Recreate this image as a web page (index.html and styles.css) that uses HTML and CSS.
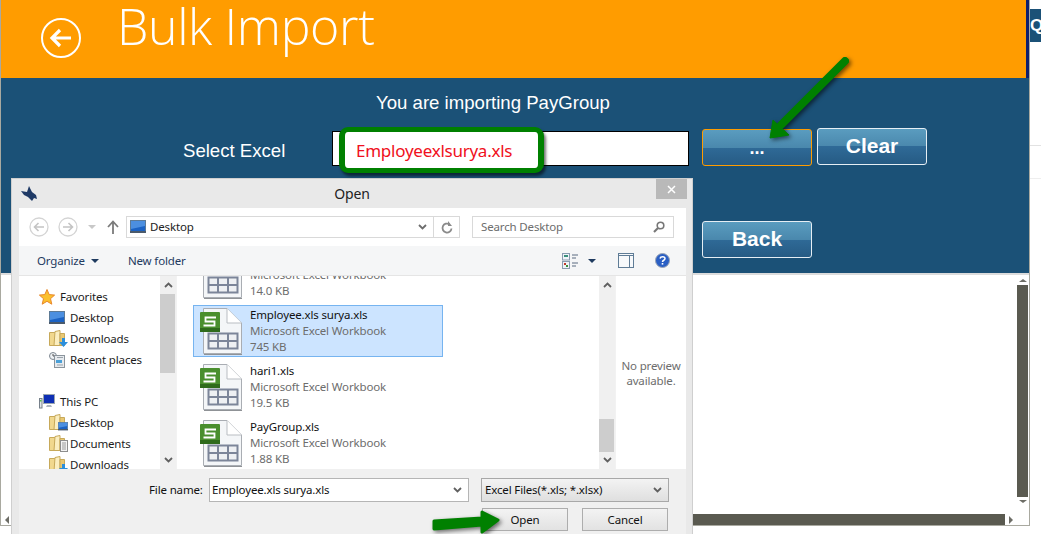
FILE: index.html
```html
<!DOCTYPE html>
<html lang="en">
<head>
<meta charset="utf-8">
<title>Bulk Import</title>
<link rel="stylesheet" href="styles.css">
</head>
<body>
<svg class="defs" width="0" height="0" aria-hidden="true">
  <symbol id="xls" viewBox="0 0 44 48">
    <path d="M3.500 1.500H27L41.500 16V46.500H3.500Z" fill="#f4f6f8" stroke="#a9adb3"/>
    <path d="M27 1.500V16H41.500" fill="#fff" stroke="#b9bdc2"/>
    <path d="M4 47.500H42" stroke="#8f9296" stroke-width="1"/>
    <path d="M8.500 26.500H37.500V41.500H8.500ZM8.500 34H37.500M18 26.500V41.500M28 26.500V41.500" fill="#eef0f3" stroke="#7c8599" stroke-width="2"/>
    <rect x="0" y="5" width="20" height="20" rx="1" fill="#4a8f2e"/>
    <rect x="0" y="21" width="20" height="4" fill="#2f6b1c"/>
    <path d="M16 10.500H5.500V14.500H14.500V18.500H3.500" fill="none" stroke="#fff" stroke-width="1.800"/>
  </symbol>
  <symbol id="screen" viewBox="0 0 16 14">
    <rect x=".5" y=".5" width="15" height="12" fill="#1b62c4" stroke="#5d7a96"/>
    <path d="M1 1H15V6L1 9Z" fill="#4c8fe0"/>
    <rect x="0" y="11" width="16" height="2" fill="#4b5a6b"/>
  </symbol>
  <symbol id="folder" viewBox="0 0 16 17">
    <path d="M.5 2.500H6.500V15.500H.5Z" fill="#f1d88e" stroke="#c7a95a"/>
    <path d="M6 1.500L11 .5V15.500H5Z" fill="#fbeec0" stroke="#c7a95a"/>
    <path d="M11 3.500H15.500V15.500H11Z" fill="#e9c873" stroke="#c7a95a"/>
  </symbol>
  <symbol id="sparrow" viewBox="0 0 16 16">
    <path d="M0 5L6 6L8 0L11 6L15 9L16 13L13 12L11 15L7 11L3 9Z" fill="#1f3a66"/>
  </symbol>
</svg>

<main class="app">
  <header class="hero">
    <svg class="back-circle" width="42" height="42" viewBox="0 0 42 42" aria-hidden="true">
      <circle cx="21" cy="21" r="19" fill="none" stroke="#fff" stroke-width="2"/>
      <path d="M31 21H12M20 13L12 21L20 29" fill="none" stroke="#fff" stroke-width="3.200"/>
    </svg>
    <h1 class="hero-title">Bulk Import</h1>
  </header>

  <section class="panel">
    <p class="lead">You are importing PayGroup</p>
    <div class="form-row">
      <label class="field-label">Select Excel</label>
      <div class="file-input"></div>
      <button class="glossy focus">...</button>
      <button class="glossy clear">Clear</button>
    </div>
    <div class="back-row"><button class="glossy">Back</button></div>
  </section>

  <section class="results">
    <div class="vscroll">
      <span class="tri tri-up"></span>
      <span class="vthumb"></span>
      <span class="tri tri-down"></span>
    </div>
    <div class="hscroll">
      <span class="tri tri-left"></span>
      <span class="hthumb"></span>
      <span class="tri tri-right"></span>
    </div>
  </section>
</main>

<aside class="sidebar">
  <div class="side-block">Q</div>
  <div class="side-line"></div>
</aside>

<div class="dialog">
  <div class="dlg-title">
    <svg class="bird" width="16" height="16"><use href="#sparrow"/></svg>
    <span class="dlg-name">Open</span>
    <span class="dlg-close">
      <svg width="9" height="9" viewBox="0 0 9 9"><path d="M1 1L8 8M8 1L1 8" stroke="#fff" stroke-width="1.500"/></svg>
    </span>
  </div>
  <div class="dlg-client">
    <div class="nav-row">
      <svg class="nav-btn" width="20" height="20" viewBox="0 0 20 20"><circle cx="10" cy="10" r="9" fill="none" stroke="#d4d4d4" stroke-width="1.300"/><path d="M15 10H6M9.500 6L5.500 10L9.500 14" fill="none" stroke="#c4c4c4" stroke-width="1.600"/></svg>
      <svg class="nav-btn fwd" width="20" height="20" viewBox="0 0 20 20"><circle cx="10" cy="10" r="9" fill="none" stroke="#d4d4d4" stroke-width="1.300"/><path d="M5 10H14M10.500 6L14.500 10L10.500 14" fill="none" stroke="#c4c4c4" stroke-width="1.600"/></svg>
      <span class="caret-gray"></span>
      <svg class="nav-up" width="12" height="14" viewBox="0 0 12 14"><path d="M6 14V2M1 7L6 1.500L11 7" fill="none" stroke="#7b7b7b" stroke-width="1.800"/></svg>
      <div class="address">
        <svg width="16" height="14"><use href="#screen"/></svg>
        <span class="addr-text">Desktop</span>
        <svg class="chev" width="9" height="6" viewBox="0 0 9 6"><path d="M1 1L4.500 4.500L8 1" fill="none" stroke="#6d6d6d" stroke-width="1.800"/></svg>
        <span class="refresh">
          <svg width="12" height="13" viewBox="0 0 12 13"><path d="M8.500 3.300A4.500 4.500 0 1 0 10.500 7.500" fill="none" stroke="#8a8a8a" stroke-width="1.800"/><path d="M7 0V5H11Z" fill="#8a8a8a"/></svg>
        </span>
      </div>
      <div class="search">
        <span>Search Desktop</span>
        <svg width="12" height="12" viewBox="0 0 12 12"><circle cx="7.500" cy="4.500" r="3.300" fill="none" stroke="#777" stroke-width="1.600"/><path d="M5 7L1 11" stroke="#777" stroke-width="2.200"/></svg>
      </div>
    </div>
    <div class="toolbar">
      <span class="tool">Organize</span>
      <span class="caret-dark"></span>
      <span class="tool newf">New folder</span>
      <span class="tool-spacer"></span>
      <svg width="16" height="16" viewBox="0 0 16 16"><rect x=".5" y=".5" width="7" height="6.500" fill="#eef3f8" stroke="#8a9bb0"/><rect x="2" y="2" width="4" height="2" fill="#3a8f7c"/><rect x=".5" y="8.500" width="7" height="7" fill="#eef3f8" stroke="#8a9bb0"/><rect x="2" y="10" width="2" height="2" fill="#c0392b"/><rect x="4" y="12" width="2" height="2" fill="#3a8f3c"/><path d="M10 2H16M10 5H14M10 10H16M10 13H14" stroke="#5a6b80"/></svg>
      <span class="caret-dark view-caret"></span>
      <svg class="pane" width="16" height="15" viewBox="0 0 16 15"><rect x=".5" y=".5" width="15" height="14" fill="#f7f9fb" stroke="#5f7c96"/><path d="M1 2.500H15M11.500 3V14" stroke="#5f7c96"/></svg>
      <svg class="help" width="15" height="15" viewBox="0 0 15 15"><circle cx="7.500" cy="7.500" r="7" fill="#2a5fc4" stroke="#9aa5b5"/><path d="M5 5.500C5.500 3 10 3 10 5.500C10 7.500 7.500 7 7.500 9" fill="none" stroke="#fff" stroke-width="1.500"/><rect x="6.700" y="10" width="1.600" height="1.600" fill="#fff"/></svg>
    </div>
    <div class="browser">
      <nav class="tree">
        <div class="tree-row lvl0"><svg width="16" height="16" viewBox="0 0 16 16"><path d="M8 .5L10.200 5.600L15.600 6.100L11.500 9.700L12.800 15.200L8 12.300L3.200 15.200L4.500 9.700L.4 6.100L5.800 5.600Z" fill="#fbc02d" stroke="#e8862a"/></svg><span>Favorites</span></div>
        <div class="tree-row"><svg width="16" height="14"><use href="#screen"/></svg><span>Desktop</span></div>
        <div class="tree-row"><span class="ico"><svg width="16" height="17"><use href="#folder"/></svg><svg class="badge" width="9" height="9" viewBox="0 0 9 9"><path d="M3 0H6V4H9L4.500 9L0 4H3Z" fill="#2c8fdc"/></svg></span><span>Downloads</span></div>
        <div class="tree-row"><svg width="16" height="16" viewBox="0 0 16 16"><circle cx="4" cy="4" r="3.500" fill="#eef1f4" stroke="#7d8790"/><path d="M4 2V4H6" stroke="#555" fill="none"/><rect x="5.500" y="3.500" width="10" height="12" fill="#e6eaee" stroke="#8b949c"/><rect x="7" y="8" width="6" height="3" fill="#4aa0d8"/><path d="M8 5.500H14M8 13H14" stroke="#9aa3ab"/></svg><span>Recent places</span></div>
        <div class="tree-row blank"></div>
        <div class="tree-row lvl0"><svg width="16" height="15" viewBox="0 0 16 15"><rect x=".5" y="4.500" width="2.500" height="9.500" fill="#dfe3e6" stroke="#76808a"/><rect x="4.500" y=".5" width="11" height="9" fill="#0e2fb4" stroke="#9aa5b0"/><path d="M8 11H12L13 13H7Z" fill="#aeb6bd"/><rect x="1" y="6" width="1.500" height="1.500" fill="#58c04a"/></svg><span>This PC</span></div>
        <div class="tree-row"><span class="ico"><svg width="16" height="17"><use href="#folder"/></svg><svg class="badge" width="10" height="9"><use href="#screen"/></svg></span><span>Desktop</span></div>
        <div class="tree-row"><span class="ico"><svg width="16" height="17"><use href="#folder"/></svg><svg class="badge" width="8" height="12" viewBox="0 0 8 12"><rect x=".5" y=".5" width="7" height="11" fill="#f3f3f3" stroke="#8d8d8d"/><path d="M2 3H6M2 5H6M2 7H6M2 9H6" stroke="#9a9a9a"/></svg></span><span>Documents</span></div>
        <div class="tree-row"><span class="ico"><svg width="16" height="17"><use href="#folder"/></svg><svg class="badge" width="9" height="9" viewBox="0 0 9 9"><path d="M3 0H6V4H9L4.500 9L0 4H3Z" fill="#2c8fdc"/></svg></span><span>Downloads</span></div>
      </nav>
      <div class="dscroll tree-scroll">
        <svg class="cv" width="9" height="6" viewBox="0 0 9 6"><path d="M1 5L4.500 1.500L8 5" fill="none" stroke="#606060" stroke-width="1.800"/></svg>
        <svg class="cv cv-end" width="9" height="6" viewBox="0 0 9 6"><path d="M1 1L4.500 4.500L8 1" fill="none" stroke="#606060" stroke-width="1.800"/></svg>
        <span class="dthumb"></span>
      </div>
      <div class="files">
        <div class="file">
          <svg width="44" height="48"><use href="#xls"/></svg>
          <div class="file-text"><b>File</b><i>Microsoft Excel Workbook</i><i>14.0 KB</i></div>
        </div>
        <div class="file selected">
          <svg width="44" height="48"><use href="#xls"/></svg>
          <div class="file-text"><b>Employee.xls surya.xls</b><i>Microsoft Excel Workbook</i><i>745 KB</i></div>
        </div>
        <div class="file">
          <svg width="44" height="48"><use href="#xls"/></svg>
          <div class="file-text"><b>hari1.xls</b><i>Microsoft Excel Workbook</i><i>19.5 KB</i></div>
        </div>
        <div class="file">
          <svg width="44" height="48"><use href="#xls"/></svg>
          <div class="file-text"><b>PayGroup.xls</b><i>Microsoft Excel Workbook</i><i>1.88 KB</i></div>
        </div>
      </div>
      <div class="dscroll file-scroll">
        <svg class="cv" width="9" height="6" viewBox="0 0 9 6"><path d="M1 5L4.500 1.500L8 5" fill="none" stroke="#606060" stroke-width="1.800"/></svg>
        <svg class="cv cv-end" width="9" height="6" viewBox="0 0 9 6"><path d="M1 1L4.500 4.500L8 1" fill="none" stroke="#606060" stroke-width="1.800"/></svg>
        <span class="dthumb"></span>
      </div>
      <div class="preview">No preview available.</div>
    </div>
    <div class="dlg-foot">
      <div class="foot-row">
        <span class="foot-label">File name:</span>
        <div class="name-input"><span>Employee.xls surya.xls</span><svg width="9" height="6" viewBox="0 0 9 6"><path d="M1 1L4.500 4.500L8 1" fill="none" stroke="#606060" stroke-width="1.800"/></svg></div>
        <div class="type-select"><span>Excel Files(*.xls; *.xlsx)</span><svg width="9" height="6" viewBox="0 0 9 6"><path d="M1 1L4.500 4.500L8 1" fill="none" stroke="#606060" stroke-width="1.800"/></svg></div>
      </div>
      <div class="foot-row actions">
        <button class="win-btn">Open</button>
        <button class="win-btn">Cancel</button>
      </div>
    </div>
  </div>
</div>

<div class="callout"><span>Employeexlsurya.xls</span></div>

<svg class="arrow arrow-top" width="100" height="100" viewBox="0 0 100 100" aria-hidden="true">
  <path d="M4 85L7 67L23 82Z" fill="#008000" stroke="#008000" stroke-width="1" stroke-linejoin="round"/>
  <path d="M79 8L15 72" fill="none" stroke="#008000" stroke-width="8" stroke-linecap="round"/>
</svg>
<svg class="arrow arrow-bottom" width="90" height="30" viewBox="0 0 90 30" aria-hidden="true">
  <path d="M6 17L54 14L54 8L70 16L54 28L54 21L6 25Z" fill="#008000" stroke="#008000" stroke-width="3" stroke-linejoin="round"/>
</svg>
</body>
</html>
```

FILE: styles.css
```css
* { box-sizing: border-box; }
html, body { margin: 0; height: 534px; overflow: hidden; background: #fff; }
body { display: flex; position: relative; font-family: "Liberation Sans", Arial, sans-serif; }
.defs { position: absolute; }

/* Page behind the dialog */
.app { width: 1030px; height: 526px; display: flex; flex-direction: column; border-left: 1px solid #a9a9a0; border-right: 1px solid #a9a9a0; border-bottom: 1px solid #a9a9a0; flex: none; }
.hero { height: 78px; background: #ff9c00; display: flex; align-items: flex-start; border-right: 3px solid #0d1f6d; overflow: hidden; }
.back-circle { margin: 17px 0 0 39px; flex: none; }
.hero-title { margin: 0 0 0 35px; font: 350 50px/52px "Open Sans", sans-serif; color: #fff; letter-spacing: -.35px; }

.panel { height: 195px; background: #1b5177; color: #fff; display: flex; flex-direction: column; }
.lead { margin: 14px 0 0; height: 22px; padding-left: 375px; font-size: 18.6px; line-height: 22px; }
.form-row { margin-top: 14px; height: 38px; display: flex; align-items: flex-start; }
.field-label { margin: 3px 0 0 182px; width: 149px; font-size: 18.6px; height: 35px; line-height: 39px; }
.file-input { width: 357px; height: 35px; margin-top: 3px; background: #fff; border: 1px solid #000; }
.glossy { width: 110px; height: 37px; padding: 0 0 3px; border: 1px solid #e6eef4; border-radius: 3px; background: linear-gradient(#5a9cbf 0, #4a88ad 50%, #2f6a97 50%, #265b84 100%); color: #fff; font: 700 21px/1 "Liberation Sans", Arial, sans-serif; }
.focus { margin: 1px 0 0 13px; padding: 0; font-size: 18px; border-color: #ff9c00; }
.clear { margin-left: 5px; }
.back-row { margin-top: 55px; padding-left: 701px; }

.results { flex: 1; position: relative; background: #fff; border-top: 2px solid #dcdcdc; }
.vscroll { position: absolute; right: 1px; top: 0; bottom: 22px; width: 11px; display: flex; flex-direction: column; align-items: center; padding-top: 4px; gap: 3px; }
.vthumb { flex: 1; width: 11px; background: #5a5a50; }
.hscroll { position: absolute; left: 4px; right: 1px; bottom: 0; height: 11px; display: flex; align-items: center; }
.hthumb { width: 988px; margin-left: 8px; height: 11px; background: #5a5a50; }
.tri { width: 0; height: 0; border-style: solid; border-color: transparent; flex: none; }
.tri-up { border-width: 0 4px 3px; border-bottom-color: #6d6d66; }
.tri-down { border-width: 3px 4px 0; border-top-color: #6d6d66; }
.tri-left { border-width: 4px 4px 4px 0; border-right-color: #6d6d66; }
.tri-right { border-width: 4px 0 4px 4px; border-left-color: #6d6d66; margin-left: 4px; }

.sidebar { flex: 1; min-width: 0; overflow: hidden; }
.side-block { margin-top: 9px; height: 33px; background: #1b5177; color: #fff; font: 700 17px/33px "Liberation Sans", sans-serif; width: 11px; overflow: hidden; }
.side-line { margin-top: 103px; height: 34px; border-top: 1px solid #e2e2e2; border-bottom: 1px solid #eee; }

/* Open dialog */
.dialog { position: absolute; left: 11px; top: 178px; width: 682px; height: 356px; background: #e9e9e9; border: 1px solid #cfcfcf; border-bottom: 0; display: flex; flex-direction: column; font: 11.5px/16px "Noto Sans", "Open Sans", sans-serif; letter-spacing: -.15px; color: #111; overflow: hidden; }
.dlg-title { height: 29px; position: relative; display: flex; justify-content: center; align-items: center; flex: none; }
.bird { position: absolute; left: 9px; top: 7px; }
.dlg-name { font-size: 14px; color: #222; }
.dlg-close { position: absolute; right: 5px; top: 0; width: 31px; height: 20px; background: #b9b9b9; display: flex; align-items: center; justify-content: center; }
.dlg-client { margin: 0 6px 0 7px; flex: 1; display: flex; flex-direction: column; background: #f0f0f0; min-height: 0; }

.nav-row { height: 38px; background: #fff; display: flex; align-items: center; padding-left: 10px; flex: none; }
.nav-btn { flex: none; }
.fwd { margin-left: 9px; }
.caret-gray { width: 0; height: 0; border: 4px solid transparent; border-top-color: #c8c8c8; border-bottom: 0; margin-left: 10px; }
.nav-up { margin-left: 11px; }
.address { width: 334px; height: 22px; margin-left: 7px; border: 1px solid #d9d9d9; display: flex; align-items: center; padding-left: 3px; color: #222; }
.addr-text { margin-left: 4px; flex: 1; }
.chev { margin-right: 6px; }
.refresh { width: 26px; height: 20px; border-left: 1px solid #d9d9d9; display: flex; align-items: center; justify-content: center; }
.search { width: 202px; height: 22px; margin-left: 12px; border: 1px solid #d9d9d9; display: flex; align-items: center; justify-content: space-between; padding: 0 8px; color: #6d6d6d; }

.toolbar { height: 30px; background: #f5f6f7; border-bottom: 1px solid #e5e5e5; display: flex; align-items: center; padding-left: 18px; color: #1e3a5f; flex: none; }
.caret-dark { width: 0; height: 0; border: 4px solid transparent; border-top-color: #1e3a5f; border-bottom: 0; margin-left: 6px; }
.newf { margin-left: 29px; }
.tool-spacer { flex: 1; }
.view-caret { margin-left: 10px; }
.pane { margin-left: 22px; }
.help { margin-left: 21px; margin-right: 16px; }

.browser { height: 193px; background: #fff; display: flex; flex: none; overflow: hidden; }
.tree { width: 141px; padding-top: 10px; overflow: hidden; flex: none; }
.tree-row { height: 21px; display: flex; align-items: center; gap: 5px; padding-left: 30px; color: #1c1c1c; }
.lvl0 { padding-left: 20px; }
.ico { position: relative; width: 16px; height: 17px; display: block; }
.ico svg { display: block; }
.badge { position: absolute; right: -3px; bottom: 0; }
.dscroll { width: 16px; background: #f0f0f0; position: relative; flex: none; display: flex; flex-direction: column; align-items: center; padding: 6px 0; justify-content: space-between; }
.dthumb { position: absolute; left: 0; right: 1px; background: #cdcdcd; }
.tree-scroll .dthumb { top: 18px; height: 79px; }
.file-scroll .dthumb { top: 143px; height: 33px; }
.files { width: 423px; padding-left: 16px; display: flex; flex-direction: column; gap: 4px; overflow: hidden; flex: none; border-left: 1px solid #f2f2f2; }
.file { width: 250px; height: 52px; display: flex; flex: none; align-items: center; padding-left: 6px; gap: 6px; border: 1px solid transparent; }
.file:first-child { margin-top: -27px; }
.selected { background: #cce4ff; border-color: #76b4f0; }
.file-text { display: flex; flex-direction: column; }
.file-text b { font-weight: 400; color: #111; }
.file-text i { font-style: normal; color: #6d6d6d; }
.preview { flex: 1; display: flex; align-items: center; text-align: center; color: #6d6d6d; line-height: 15px; border-left: 1px solid #f2f2f2; padding: 0 4px; }

.dlg-foot { flex: 1; background: #f0f0f0; padding-top: 9px; }
.foot-row { display: flex; align-items: center; }
.foot-label { margin-left: 130px; width: 60px; }
.name-input { width: 260px; height: 24px; background: #fff; border: 1px solid #b5b5b5; display: flex; align-items: center; justify-content: space-between; padding: 0 6px 0 2px; color: #111; }
.type-select { width: 188px; height: 24px; margin-left: 12px; background: linear-gradient(#f3f3f3, #dfdfdf); border: 1px solid #a8a8a8; display: flex; align-items: center; justify-content: space-between; padding: 0 6px 0 3px; }
.actions { margin-top: 6px; padding-left: 463px; gap: 14px; }
.win-btn { width: 86px; height: 23px; padding: 0; background: linear-gradient(#f3f3f3, #e2e2e2); border: 1px solid #adadad; font: 11.5px/16px "Noto Sans", "Open Sans", sans-serif; letter-spacing: -.15px; color: #111; }

/* Annotations */
.callout { position: absolute; left: 339px; top: 127px; width: 205px; height: 46px; background: #fff; border-style: solid; border-color: #008000; border-width: 5px 6px; border-radius: 9px; box-shadow: 2px 3px 3px rgba(0,0,0,.55); display: flex; align-items: center; padding-left: 11px; color: #f01020; font: 17px/1 "Noto Sans", "Open Sans", sans-serif; letter-spacing: -.25px; }
.arrow { position: absolute; filter: drop-shadow(2px 2px 2px rgba(0,0,0,.55)); }
.arrow-top { left: 766px; top: 53px; }
.arrow-bottom { left: 428px; top: 504px; }
```
